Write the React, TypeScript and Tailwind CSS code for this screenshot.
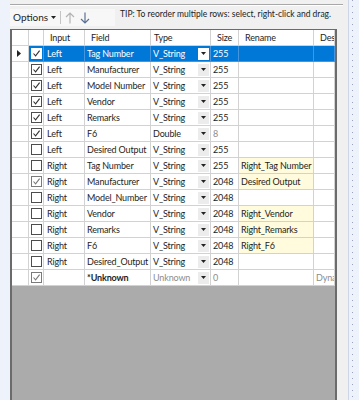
import React from "react";

type Row = {
  checked: boolean;
  dim?: boolean;
  input: string;
  field: string;
  type: string;
  size: string;
  rename: string;
  desc?: string;
  selected?: boolean;
  grey?: boolean;
  unknown?: boolean;
};

const rows: Row[] = [
  { checked: true, input: "Left", field: "Tag Number", type: "V_String", size: "255", rename: "", selected: true },
  { checked: true, input: "Left", field: "Manufacturer", type: "V_String", size: "255", rename: "" },
  { checked: true, input: "Left", field: "Model Number", type: "V_String", size: "255", rename: "" },
  { checked: true, input: "Left", field: "Vendor", type: "V_String", size: "255", rename: "" },
  { checked: true, input: "Left", field: "Remarks", type: "V_String", size: "255", rename: "" },
  { checked: true, input: "Left", field: "F6", type: "Double", size: "8", rename: "", grey: true },
  { checked: false, input: "Left", field: "Desired Output", type: "V_String", size: "255", rename: "" },
  { checked: false, input: "Right", field: "Tag Number", type: "V_String", size: "255", rename: "Right_Tag Number" },
  { checked: true, dim: true, input: "Right", field: "Manufacturer", type: "V_String", size: "2048", rename: "Desired Output" },
  { checked: false, input: "Right", field: "Model_Number", type: "V_String", size: "2048", rename: "" },
  { checked: false, input: "Right", field: "Vendor", type: "V_String", size: "2048", rename: "Right_Vendor" },
  { checked: false, input: "Right", field: "Remarks", type: "V_String", size: "2048", rename: "Right_Remarks" },
  { checked: false, input: "Right", field: "F6", type: "V_String", size: "2048", rename: "Right_F6" },
  { checked: false, input: "Right", field: "Desired_Output", type: "V_String", size: "2048", rename: "" },
  { checked: true, dim: true, input: "", field: "*Unknown", type: "Unknown", size: "0", rename: "", desc: "Dynamic", unknown: true },
];

const cols = "grid grid-cols-[17px_15px_41px_66px_60px_28px_75px_21px]";

function Check({ on, dim, sel }: { on: boolean; dim?: boolean; sel?: boolean }) {
  return (
    <div
      className={`flex h-[11px] w-[11px] items-center justify-center border bg-white ${
        sel ? "border-white" : dim ? "border-[#7a7a7a]" : "border-[#4d4d4d]"
      }`}
    >
      {on ? (
        <svg width="9" height="9" viewBox="0 0 9 9">
          <path d="M1.5 4.5 L3.6 6.8 L7.6 1.6" fill="none" stroke={dim ? "#7a7a7a" : "#333"} strokeWidth="1.1" />
        </svg>
      ) : null}
    </div>
  );
}

function Drop({ sel }: { sel?: boolean }) {
  return (
    <div className={`mr-[1px] flex h-[12px] w-[11px] shrink-0 items-center justify-center ${sel ? "bg-white" : "bg-[#ececec]"}`}>
      <svg width="5" height="3" viewBox="0 0 5 3">
        <path d="M0 0 H5 L2.5 3 Z" fill="#222" />
      </svg>
    </div>
  );
}

export default function App() {
  const cell = "flex items-center overflow-hidden whitespace-nowrap border-b border-r";
  return (
    <div className="flex h-[400px] w-[359px] overflow-hidden bg-[#eef2fa] font-['Lato','Noto_Sans',sans-serif] text-[9px] text-[#1e1e1e]">
      <div className="w-[10px] shrink-0" />
      <div className="flex w-[339px] shrink-0 flex-col border-r border-[#cdd5ea] bg-[#f0f0f0]">
        <div className="mt-[4px] mr-[5px] h-[1px] bg-[#a8a8a8]" />
        <div className="h-[1px] mr-[5px] bg-white" />
        <div className="mt-[3px] flex h-[17px] items-start">
          <div className="flex h-[17px] w-[105px] items-center bg-[#f7f7f7] pl-[3px]">
            <span className="text-[10px]">Options</span>
            <svg className="ml-[3px]" width="5" height="3" viewBox="0 0 5 3">
              <path d="M0 0 H5 L2.5 3 Z" fill="#222" />
            </svg>
            <div className="ml-[4px] h-[13px] w-[1px] bg-[#c4c4c4]" />
            <svg className="ml-[4px]" width="10" height="12" viewBox="0 0 10 12">
              <path d="M5 11.5 V1 M1 5 L5 1 L9 5" fill="none" stroke="#b4b4b4" strokeWidth="1.2" />
            </svg>
            <svg className="ml-[5px]" width="10" height="12" viewBox="0 0 10 12">
              <path d="M5 0.5 V11 M1 7 L5 11 L9 7" fill="none" stroke="#5a7194" strokeWidth="1.2" />
            </svg>
          </div>
          <span className="ml-[5px] mt-[-1px] text-[8.5px] text-[#222]">
            TIP: To reorder multiple rows: select, right-click and drag.
          </span>
        </div>
        <div className="mt-[3px] flex w-[327px] flex-1 flex-col border-x-2 border-t border-[#6b6b6b] bg-[#ababab] tracking-[-0.15px]">
          <div className={`${cols} h-[16px] bg-white`}>
            {["", "", "Input", "Field", "Type", "Size", "Rename", "Desc"].map((h, i) => (
              <div key={i} className={`${cell} border-[#d2d2d2] ${i === 4 ? "pl-[3px]" : "pl-[6px]"}`}>
                {h}
              </div>
            ))}
          </div>
          {rows.map((r, i) => {
            const sel = r.selected;
            const bc = sel ? "border-[#4696df]" : "border-[#d2d2d2]";
            const bg = sel ? "bg-[#0078d7] text-white" : "bg-white";
            const greyText = sel ? "" : "text-[#8c8c8c]";
            return (
              <div key={i} className={`${cols} h-[16px]`}>
                <div className={`${cell} border-[#d2d2d2] bg-white pl-[5px]`}>
                  {sel ? (
                    <svg width="4" height="7" viewBox="0 0 4 7">
                      <path d="M0 0 L4 3.5 L0 7 Z" fill="#222" />
                    </svg>
                  ) : null}
                </div>
                <div className={`${cell} ${bc} ${bg} justify-center`}>
                  <Check on={r.checked} dim={r.dim} sel={sel} />
                </div>
                <div className={`${cell} ${bc} ${bg} px-[3px]`}>{r.input}</div>
                <div className={`${cell} ${bc} ${bg} px-[2px] ${r.unknown ? "font-bold" : ""}`}>{r.field}</div>
                <div className={`${cell} ${bc} ${bg} justify-between pl-[2px]`}>
                  <span className={r.unknown ? greyText : ""}>{r.type}</span>
                  <Drop sel={sel} />
                </div>
                <div className={`${cell} ${bc} ${bg} px-[2px] ${r.grey || r.unknown ? greyText : ""}`}>{r.size}</div>
                <div className={`${cell} ${bc} ${r.rename ? "bg-[#fffbdc]" : bg} px-[2px]`}>{r.rename}</div>
                <div className={`${cell} ${bc} ${bg} px-[2px] ${greyText}`}>{r.desc ?? ""}</div>
              </div>
            );
          })}
        </div>
      </div>
      <div className="ml-[3px] h-full w-[1px] bg-[repeating-linear-gradient(to_bottom,#9aa3bd_0_1px,transparent_1px_6px)]" />
    </div>
  );
}
